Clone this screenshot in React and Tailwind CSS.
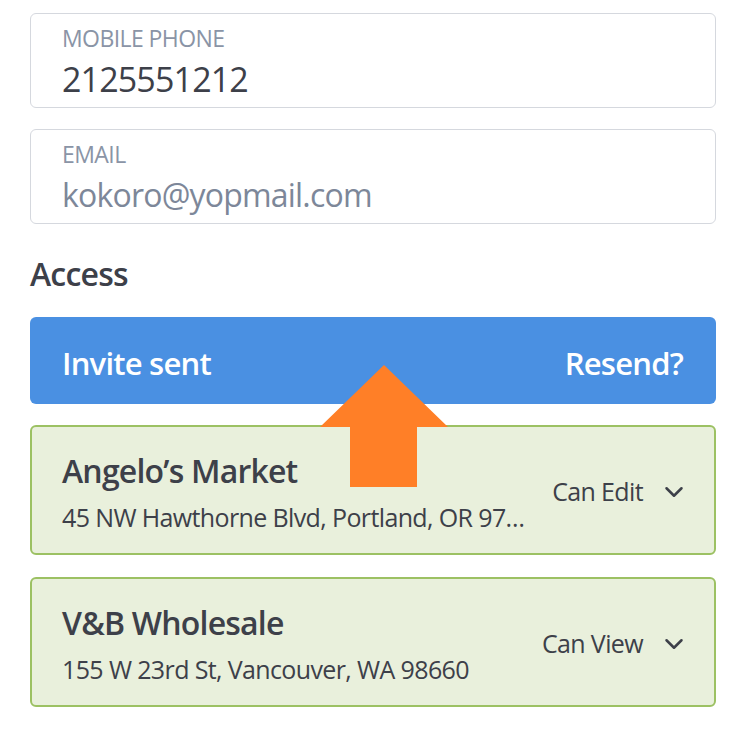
import React from 'react';
import { ChevronDown } from 'lucide-react';

const font = { fontFamily: '"Open Sans", "Noto Sans", sans-serif' };

function Field({ label, value, muted }) {
  return (
    <div className="h-[95px] border border-[#d5d8de] rounded-md px-[31px] pt-[10px]">
      <div className="text-[23px] leading-[28px] text-[#8a94a6] uppercase tracking-tight">{label}</div>
      <div className={`mt-[7px] leading-[40px] tracking-tight ${muted ? 'text-[32px] text-[#7d8799]' : 'text-[34px] text-[#3d4049]'}`}>{value}</div>
    </div>
  );
}

function StoreCard({ name, address, access }) {
  return (
    <div className="h-[130px] bg-[#e9f0dc] border-2 border-[#9cc163] rounded-md pl-[30px] pr-[25px] pt-[4px] flex items-center gap-5">
      <div className="flex-1 min-w-0">
        <div className="text-[32px] leading-[38px] font-semibold text-[#3d4049] tracking-tight whitespace-nowrap">{name}</div>
        <div className="mt-[12px] text-[25px] leading-[30px] text-[#3d4049] tracking-tight whitespace-nowrap">{address}</div>
      </div>
      <button className="flex items-center gap-[16px] text-[25px] font-medium text-[#3d4049] tracking-tight">
        {access}
        <ChevronDown size={30} strokeWidth={2} />
      </button>
    </div>
  );
}

export default function App() {
  return (
    <div className="min-h-screen bg-white" style={font}>
      <div className="relative pl-[30px] pr-[32px] pt-[13px] pb-[24px] flex flex-col">
        <Field label="Mobile Phone" value="2125551212" />
        <div className="mt-[21px]">
          <Field label="Email" value="kokoro@yopmail.com" muted />
        </div>

        <h2 className="mt-[30px] text-[32px] leading-[40px] font-semibold text-[#3d4049] tracking-tight">Access</h2>

        <div className="mt-[23px] h-[87px] bg-[#4a90e2] rounded-md pl-[32px] pr-[33px] pt-[5px] flex items-center justify-between text-white text-[31px] font-semibold tracking-tight">
          <span>Invite sent</span>
          <button>Resend?</button>
        </div>

        <div className="mt-[21px] flex flex-col gap-[22px]">
          <StoreCard name="Angelo’s Market" address="45 NW Hawthorne Blvd, Portland, OR 97…" access="Can Edit" />
          <StoreCard name="V&B Wholesale" address="155 W 23rd St, Vancouver, WA 98660" access="Can View" />
        </div>

        {/* annotation arrow over the invite bar */}
        <svg className="absolute left-[319px] top-[364px]" width="130" height="125" viewBox="0 0 130 125">
          <path d="M65 1 L129 63 L98 63 L98 123 L31 123 L31 63 L1 63 Z" fill="#ff7f27" />
        </svg>
      </div>
    </div>
  );
}
